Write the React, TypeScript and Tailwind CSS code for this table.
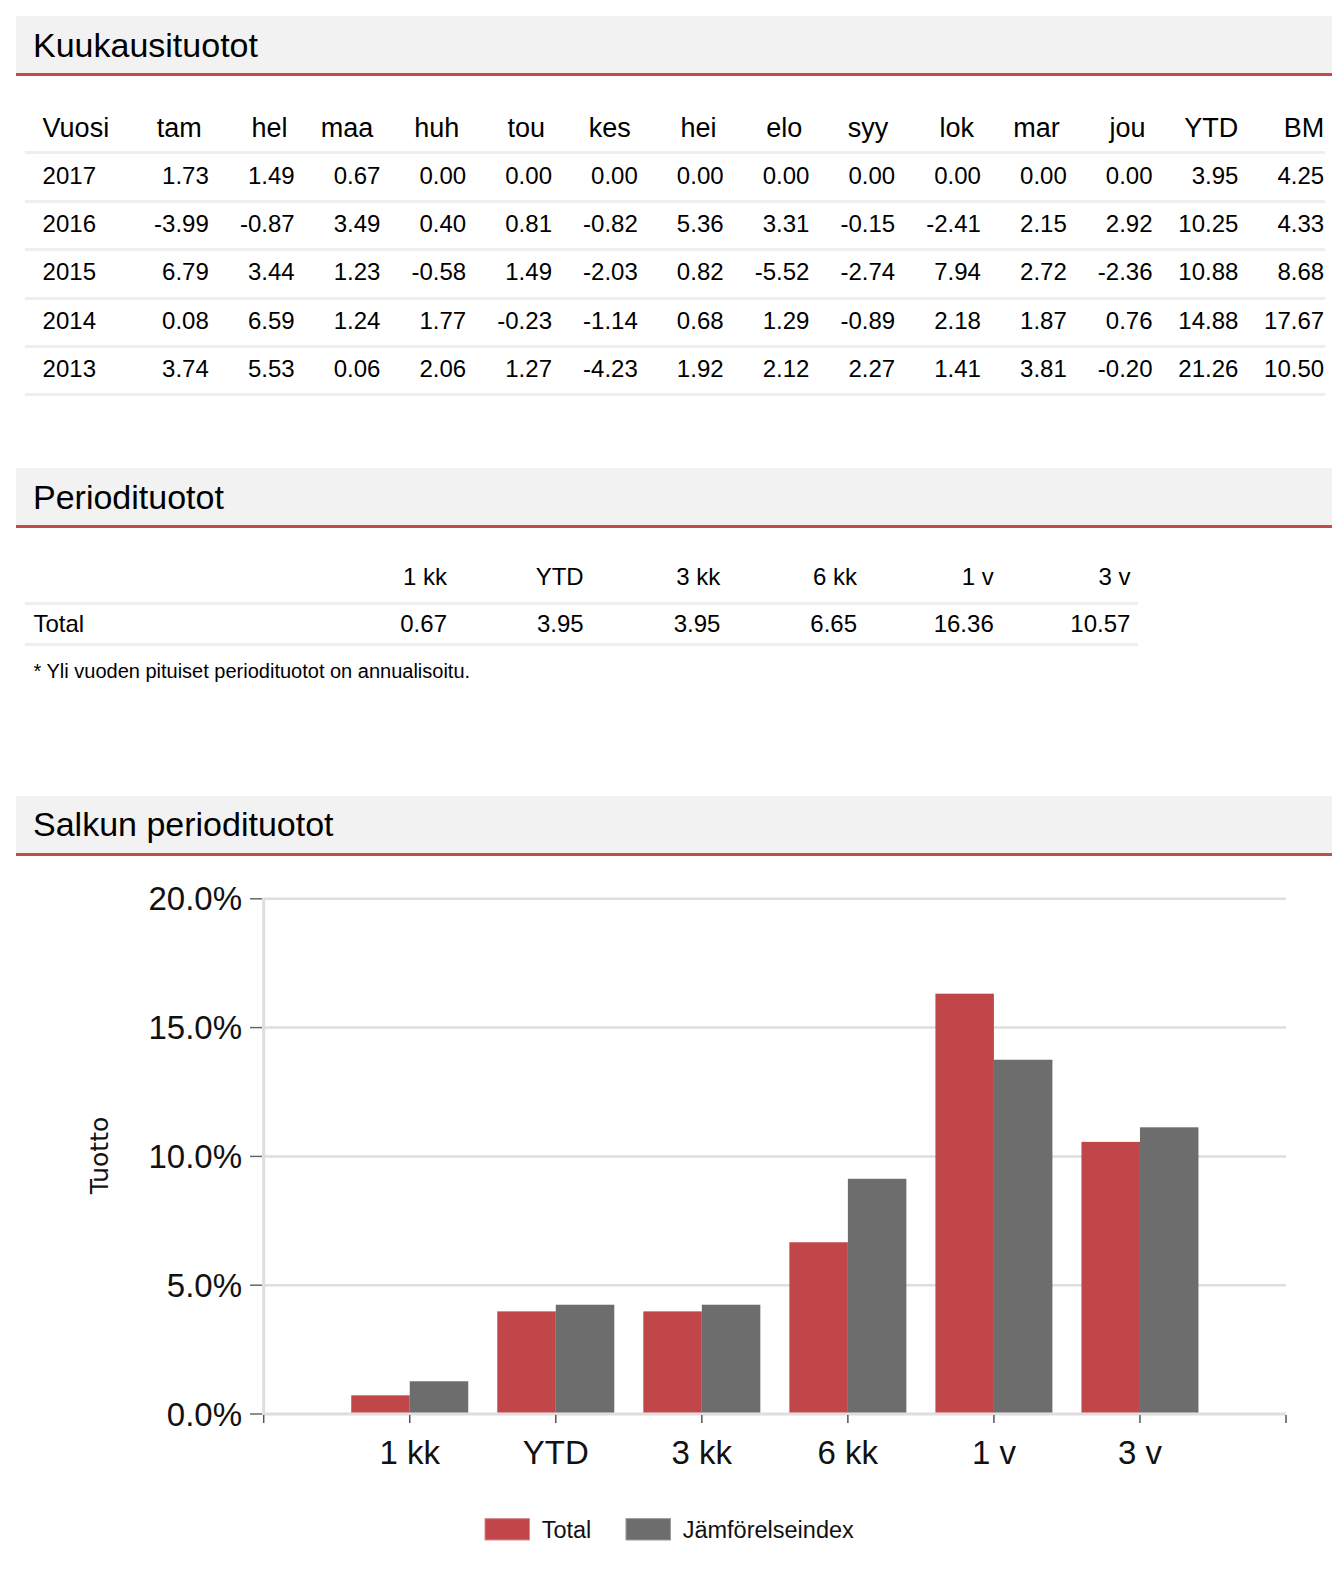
/**
 * Portfolio returns report - monthly table, period table and bar chart
 */

const months = [
  { label: 'tam', pad: true },
  { label: 'hel', pad: true },
  { label: 'maa', pad: true },
  { label: 'huh', pad: true },
  { label: 'tou', pad: true },
  { label: 'kes', pad: true },
  { label: 'hei', pad: true },
  { label: 'elo', pad: true },
  { label: 'syy', pad: true },
  { label: 'lok', pad: true },
  { label: 'mar', pad: true },
  { label: 'jou', pad: true },
  { label: 'YTD', pad: false },
  { label: 'BM', pad: false },
];

const monthly = [
  ['2017', '1.73', '1.49', '0.67', '0.00', '0.00', '0.00', '0.00', '0.00', '0.00', '0.00', '0.00', '0.00', '3.95', '4.25'],
  ['2016', '-3.99', '-0.87', '3.49', '0.40', '0.81', '-0.82', '5.36', '3.31', '-0.15', '-2.41', '2.15', '2.92', '10.25', '4.33'],
  ['2015', '6.79', '3.44', '1.23', '-0.58', '1.49', '-2.03', '0.82', '-5.52', '-2.74', '7.94', '2.72', '-2.36', '10.88', '8.68'],
  ['2014', '0.08', '6.59', '1.24', '1.77', '-0.23', '-1.14', '0.68', '1.29', '-0.89', '2.18', '1.87', '0.76', '14.88', '17.67'],
  ['2013', '3.74', '5.53', '0.06', '2.06', '1.27', '-4.23', '1.92', '2.12', '2.27', '1.41', '3.81', '-0.20', '21.26', '10.50'],
];

const periods = ['1 kk', 'YTD', '3 kk', '6 kk', '1 v', '3 v'];
const totals = ['0.67', '3.95', '3.95', '6.65', '16.36', '10.57'];

const chart = [
  { label: '1 kk', total: 0.67, bm: 1.22 },
  { label: 'YTD', total: 3.95, bm: 4.21 },
  { label: '3 kk', total: 3.95, bm: 4.21 },
  { label: '6 kk', total: 6.65, bm: 9.13 },
  { label: '1 v', total: 16.36, bm: 13.78 },
  { label: '3 v', total: 10.57, bm: 11.14 },
];

function SectionHeader({ title }: { title: string }) {
  return (
    <div className="flex h-[60px] items-center border-b-[3px] border-[#c34c4a] bg-[#f2f2f2] pl-[17px] text-[34px] leading-none text-black">
      {title}
    </div>
  );
}

function ReturnsChart() {
  const x0 = 263.7;
  const x1 = 1286;
  const zero = 558;
  const perPct = 25.76;
  const slot = (x1 - x0) / 7;
  const barW = 58.5;
  const font = "'Liberation Sans', Arial, sans-serif";

  return (
    <svg width="1342" height="733" className="block">
      {[0, 5, 10, 15, 20].map((v) => {
        const y = zero - v * perPct;
        return (
          <g key={v}>
            <line x1={x0} x2={x1} y1={y} y2={y} stroke="#dedede" strokeWidth={v === 0 ? 3 : 2.5} />
            <line x1={250} x2={262} y1={y} y2={y} stroke="#666" strokeWidth={1.5} />
            <text
              x={242}
              y={y}
              textAnchor="end"
              dominantBaseline="central"
              fontFamily={font}
              fontSize={33}
              fill="#111"
            >
              {v.toFixed(1)}%
            </text>
          </g>
        );
      })}
      <line x1={x0} x2={x0} y1={zero - 20 * perPct - 1} y2={zero + 1.5} stroke="#dedede" strokeWidth={3} />
      {[0, 1, 2, 3, 4, 5, 6, 7].map((k) => (
        <line
          key={k}
          x1={x0 + k * slot}
          x2={x0 + k * slot}
          y1={zero + 1}
          y2={zero + 9}
          stroke="#555"
          strokeWidth={1.5}
        />
      ))}
      {chart.map((c, i) => {
        const cx = x0 + (i + 1) * slot;
        const ht = c.total * 25.6;
        const hb = c.bm * 25.6;
        return (
          <g key={c.label}>
            <rect x={cx - barW} y={zero - 1.5 - ht} width={barW} height={ht} fill="#c1464a" />
            <rect x={cx} y={zero - 1.5 - hb} width={barW} height={hb} fill="#6d6d6d" />
            <text
              x={cx}
              y={596.6}
              textAnchor="middle"
              dominantBaseline="central"
              fontFamily={font}
              fontSize={33}
              fill="#111"
            >
              {c.label}
            </text>
          </g>
        );
      })}
      <text
        transform="translate(99.4 299.5) rotate(-90)"
        textAnchor="middle"
        dominantBaseline="central"
        fontFamily="'DejaVu Sans', Verdana, sans-serif"
        fontSize={25}
        fill="#111"
      >
        Tuotto
      </text>
      <rect x={485} y={662.6} width={44.5} height={21.4} fill="#c1464a" stroke="#d88a8c" strokeWidth={1} />
      <text x={541.7} y={674} dominantBaseline="central" fontFamily={font} fontSize={23.5} fill="#111">
        Total
      </text>
      <rect x={626} y={662.6} width={44.5} height={21.4} fill="#6d6d6d" stroke="#9a9a9a" strokeWidth={1} />
      <text x={682.7} y={674} dominantBaseline="central" fontFamily={font} fontSize={23.5} fill="#111">
        Jämförelseindex
      </text>
    </svg>
  );
}

export default function App() {
  return (
    <div className="min-h-[1590px] w-[1342px] bg-white font-['Liberation_Sans',Arial,sans-serif] text-black">
      <div className="ml-4 w-[1316px] pt-4">
        <SectionHeader title="Kuukausituotot" />

        <div className="ml-[9px] mt-[30px] w-[1300px]">
          <div className="flex h-[48.4px] items-center border-b-[3px] border-[#eeeeee] text-[27px]">
            <div className="w-[98px] pl-[17.6px]">Vuosi</div>
            {months.map((m) => (
              <div key={m.label} className={m.pad ? 'w-[85.8px] pr-[7px] text-right' : 'w-[85.8px] text-right'}>
                {m.label}
              </div>
            ))}
          </div>
          {monthly.map((row) => (
            <div key={row[0]} className="flex h-[48.4px] items-center border-b-[3px] border-[#eeeeee] pb-[3px] text-[24px]">
              <div className="w-[98px] pl-[17.6px]">{row[0]}</div>
              {row.slice(1).map((v, i) => (
                <div key={i} className="w-[85.8px] text-right">
                  {v}
                </div>
              ))}
            </div>
          ))}
        </div>

        <div className="mt-[72px]">
          <SectionHeader title="Periodituotot" />
        </div>

        <div className="ml-[9px] mt-[24px] w-[1113px] text-[24px]">
          <div className="flex h-[53px] items-center border-b-[3px] border-[#eeeeee]">
            <div className="w-[285.3px]" />
            {periods.map((p) => (
              <div key={p} className="w-[136.7px] text-right">
                {p}
              </div>
            ))}
          </div>
          <div className="flex h-[40.5px] items-center border-b-[3px] border-[#eeeeee]">
            <div className="w-[285.3px] pl-[8.5px]">Total</div>
            {totals.map((t, i) => (
              <div key={i} className="w-[136.7px] text-right">
                {t}
              </div>
            ))}
          </div>
        </div>

        <p className="ml-[17.5px] mt-[14px] text-[20px] leading-[23px]">
          * Yli vuoden pituiset periodituotot on annualisoitu.
        </p>

        <div className="mt-[113px]">
          <SectionHeader title="Salkun periodituotot" />
        </div>
      </div>
      <ReturnsChart />
    </div>
  );
}
